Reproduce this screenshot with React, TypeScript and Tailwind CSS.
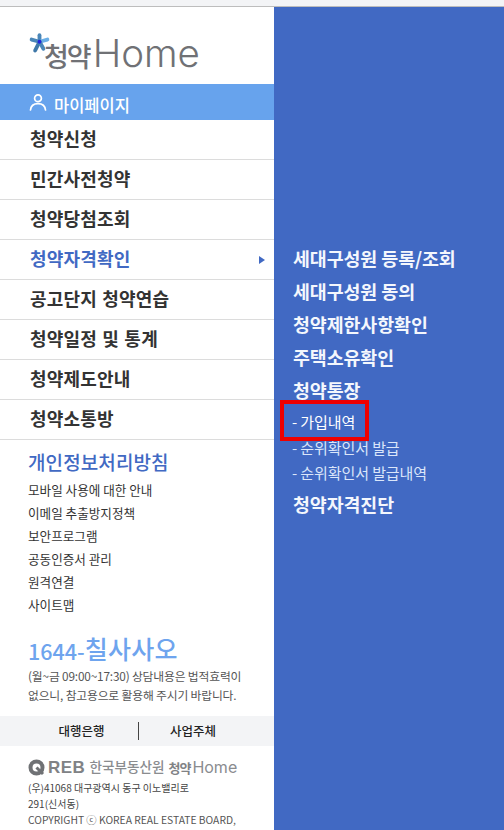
const font = { fontFamily: '"Noto Sans CJK KR", "Noto Sans", sans-serif' };

const menu = ["청약신청", "민간사전청약", "청약당첨조회", "청약자격확인", "공고단지 청약연습", "청약일정 및 통계", "청약제도안내", "청약소통방"];
const links = ["모바일 사용에 대한 안내", "이메일 추출방지정책", "보안프로그램", "공동인증서 관리", "원격연결", "사이트맵"];

function Star({ size }: { size: number }) {
  return (
    <svg width={size} height={size} viewBox="0 0 24 24" className="absolute left-0 top-0">
      <g strokeWidth="4.4" strokeLinecap="round">
        <path d="M12 10V2.5" stroke="#4a86b8" />
        <path d="M12 10L3 7.5" stroke="#4a86b8" />
        <path d="M12 10L21 7.5" stroke="#6aaee6" />
        <path d="M12 10L7 20" stroke="#3f78a8" />
        <path d="M12 10L16.5 18" stroke="#4a86b8" />
      </g>
      <circle cx="12" cy="10" r="2.2" fill="#2222dd" />
    </svg>
  );
}

export default function App() {
  return (
    <div className="w-[504px] h-[830px] overflow-hidden flex flex-col bg-white" style={font}>
      <div className="h-[7px] shrink-0 bg-[#f3f4f6] border-b border-[#bdbdbd]" />
      <div className="flex flex-1 min-h-0">
        <div className="w-[274px] shrink-0 bg-white flex flex-col overflow-hidden">
          <div className="h-[77px] shrink-0 pl-[29px] pt-[26px]">
            <div className="relative flex items-center h-[40px] w-[175px] text-[#707175]">
              <Star size={21} />
              <span className="text-[27px] font-medium leading-none tracking-[-2px] mt-[5px] ml-[15px] mr-[3px]">청약</span>
              <span className="text-[38.5px] font-light leading-none" style={{ fontFamily: '"Inter", sans-serif' }}>Home</span>
            </div>
          </div>
          <div className="h-[36px] shrink-0 bg-[#67a3ed] pl-[29px] flex items-center text-white">
            <svg width="18" height="18" viewBox="0 0 18 18" fill="none" stroke="white" strokeWidth="1.7" className="mr-[7px]">
              <circle cx="9" cy="5.2" r="3.4" />
              <path d="M1.5 17c.4-4.2 3.4-6.4 7.5-6.4s7.1 2.2 7.5 6.4" strokeLinecap="round" />
            </svg>
            <span className="text-[16.5px] font-medium leading-none mt-[6px]">마이페이지</span>
          </div>
          {menu.map((m, i) => (
            <div key={m} className={`h-[40px] shrink-0 flex items-center justify-between pl-[30px] pr-[3px] border-b border-[#dcdcdc] ${i === 3 ? "text-[#4169c3]" : "text-[#333333]"}`}>
              <span className="text-[18px] font-bold leading-none tracking-[0.2px] [word-spacing:1px] mb-[3px]">{m}</span>
              {i === 3 && <span className="mr-[6px] w-0 h-0 border-y-[4px] border-y-transparent border-l-[6px] border-l-[#4169c3]" />}
            </div>
          ))}
          <div className="pl-[28px] pt-[9px]">
            <div className="text-[19px] font-medium leading-[26px] tracking-[0.1px] text-[#4169c3]">개인정보처리방침</div>
            <div className="mt-[3px] flex flex-col">
              {links.map((l) => (
                <div key={l} className="text-[12.6px] leading-[23px] text-[#333333]">{l}</div>
              ))}
            </div>
            <div className="mt-[11px] h-[34px] flex items-end text-[#6ea4ee] leading-none">
              <span className="text-[21.5px] font-medium">1644-</span>
              <span className="text-[25px] font-medium tracking-[0.3px]">칠사사오</span>
            </div>
            <div className="mt-[5px] text-[11.8px] leading-[19px] text-[#555555] tracking-[-0.17px] whitespace-nowrap">
              <div>(월~금 09:00~17:30) 상담내용은 법적효력이</div>
              <div>없으니, 참고용으로 활용해 주시기 바랍니다.</div>
            </div>
          </div>
          <div className="mt-[12px] h-[30px] shrink-0 bg-[#f3f4f6] flex items-center text-[12.5px] font-medium text-[#222222]">
            <div className="w-[139px] text-center pl-[25px] border-r border-[#444444] leading-[18px]">대행은행</div>
            <div className="w-[108px] text-center leading-[18px]">사업주체</div>
          </div>
          <div className="pl-[28px] pt-[11px] text-[#555555]">
            <div className="flex items-center h-[20px] text-[#808285] whitespace-nowrap">
              <svg width="17" height="17" viewBox="0 0 17 17" className="mr-[3px]">
                <circle cx="8.5" cy="8.5" r="6" fill="none" stroke="#6f7174" strokeWidth="4" />
                <path d="M8.5 8.5L15 15" stroke="#6f7174" strokeWidth="3" />
              </svg>
              <span className="text-[17px] font-bold leading-none tracking-[0.5px] mr-[4px]" style={{ fontFamily: '"Liberation Sans", sans-serif' }}>REB</span>
              <span className="text-[13.6px] font-medium leading-none mr-[4px] text-[#8a8c8f]">한국부동산원</span>
              <span className="text-[13px] font-bold leading-none tracking-[-1px] mr-[2px]">청약</span>
              <span className="text-[16px] leading-none text-[#8a8c8f]" style={{ fontFamily: '"Inter", sans-serif' }}>Home</span>
            </div>
            <div className="mt-[3px] text-[10.3px] leading-[16px] text-[#444444] whitespace-nowrap">
              <div className="text-[10px]">(우)41068 대구광역시 동구 이노밸리로</div>
              <div className="text-[10px]">291(신서동)</div>
              <div className="text-[#555555]">COPYRIGHT ⓒ KOREA REAL ESTATE BOARD,</div>
            </div>
          </div>
        </div>
        <div className="flex-1 bg-[#4169c3] pl-[19px] pt-[235px] relative text-white">
          <div className="flex flex-col">
            {["세대구성원 등록/조회", "세대구성원 동의", "청약제한사항확인", "주택소유확인", "청약통장"].map((t) => (
              <div key={t} className="h-[33px] flex items-center text-[18.4px] font-bold leading-none tracking-[-0.08px] text-[#f4f7fd]">{t}</div>
            ))}
            <div className="mt-[2px] flex flex-col text-[15px] leading-[25.5px] tracking-[-0.1px] text-[#dbe6fa] -ml-[1px]">
              <div className="text-white">- 가입내역</div>
              <div>- 순위확인서 발급</div>
              <div>- 순위확인서 발급내역</div>
            </div>
            <div className="mt-[2px] h-[33px] flex items-center text-[18.4px] font-bold leading-none tracking-[-0.08px] text-[#f4f7fd]">청약자격진단</div>
          </div>
          <div className="absolute left-[6px] top-[393px] w-[89px] h-[41px] border-[4px] border-[#ee0000]" />
        </div>
      </div>
    </div>
  );
}
